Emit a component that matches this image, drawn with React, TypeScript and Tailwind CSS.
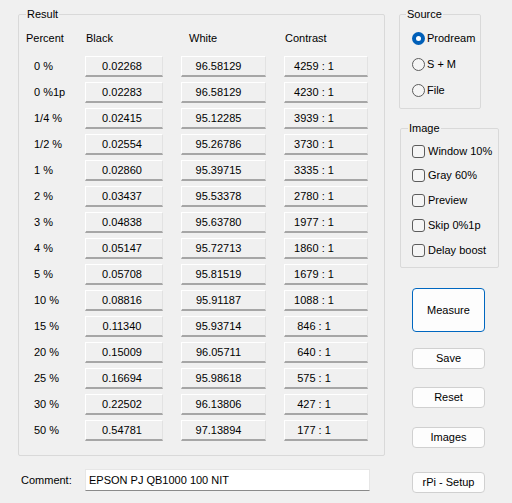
import React from 'react';

const rows: [string, string, string, string][] = [
  ['0 %', '0.02268', '96.58129', '4259 : 1'],
  ['0 %1p', '0.02283', '96.58129', '4230 : 1'],
  ['1/4 %', '0.02415', '95.12285', '3939 : 1'],
  ['1/2 %', '0.02554', '95.26786', '3730 : 1'],
  ['1 %', '0.02860', '95.39715', '3335 : 1'],
  ['2 %', '0.03437', '95.53378', '2780 : 1'],
  ['3 %', '0.04838', '95.63780', '1977 : 1'],
  ['4 %', '0.05147', '95.72713', '1860 : 1'],
  ['5 %', '0.05708', '95.81519', '1679 : 1'],
  ['10 %', '0.08816', '95.91187', '1088 : 1'],
  ['15 %', '0.11340', '95.93714', '846 : 1'],
  ['20 %', '0.15009', '96.05711', '640 : 1'],
  ['25 %', '0.16694', '95.98618', '575 : 1'],
  ['30 %', '0.22502', '96.13806', '427 : 1'],
  ['50 %', '0.54781', '97.13894', '177 : 1'],
];

const cell =
  'h-[21px] flex items-center justify-center bg-[#f0f0f0] border-t border-l border-t-white border-l-white border-r border-r-[#e2e2e2] border-b-2 border-b-[#a6a6a6]';

const Radio: React.FC<{ label: string; checked?: boolean }> = ({ label, checked }) => (
  <div className="h-[16px] flex items-center ml-[6px]">
    {checked ? (
      <span className="w-[13px] h-[13px] rounded-full bg-[#005fb8] flex items-center justify-center">
        <span className="w-[5px] h-[5px] rounded-full bg-white" />
      </span>
    ) : (
      <span className="w-[13px] h-[13px] rounded-full border border-[#5c5c5c] bg-[#f5f5f5]" />
    )}
    <span className="ml-[2px]">{label}</span>
  </div>
);

const Check: React.FC<{ label: string }> = ({ label }) => (
  <div className="h-[16px] flex items-center ml-[4px]">
    <span className="w-[13px] h-[13px] rounded-[3px] border border-[#5c5c5c] bg-[#f5f5f5]" />
    <span className="ml-[3px]">{label}</span>
  </div>
);

const Button: React.FC<{ label: string; className?: string; primary?: boolean }> = ({ label, className, primary }) => (
  <button
    className={`ml-[13px] w-[73px] flex items-center justify-center rounded-[4px] bg-[#fdfdfd] ${
      primary ? 'border border-[#0067c0]' : 'border border-[#d0d0d0]'
    } ${className ?? ''}`}
  >
    {label}
  </button>
);

export default function App() {
  return (
    <div className="w-[512px] h-[503px] bg-[#f0f0f0] flex text-[11px] leading-[13px] text-black font-['Liberation_Sans',Arial,sans-serif]">
      {/* Left column */}
      <div className="pl-[18px] pt-[8px] flex flex-col">
        <fieldset className="w-[367px] border border-[#d9d9d9] rounded-[2px] pl-[7px] pb-[14px]">
          <legend className="px-[1px] leading-[13px]">Result</legend>
          <div className="flex h-[14px] items-center mt-[10px]">
            <span className="w-[60px]">Percent</span>
            <span className="w-[103px]">Black</span>
            <span className="w-[96px]">White</span>
            <span>Contrast</span>
          </div>
          <div className="mt-[11px] flex flex-col gap-[5px]">
            {rows.map(([p, b, w, c]) => (
              <div key={p} className="flex items-center">
                <span className="w-[59px] pl-[8px]">{p}</span>
                <div className={`${cell} w-[78px] pr-[4px]`}>{b}</div>
                <div className={`${cell} w-[85px] ml-[18px] pr-[10px]`}>{w}</div>
                <div className={`${cell} w-[84px] ml-[18px] pr-[24px]`}>{c}</div>
              </div>
            ))}
          </div>
        </fieldset>

        <div className="mt-[13px] flex items-center">
          <span className="ml-[3px] w-[64px]">Comment:</span>
          <div className="w-[285px] h-[22px] bg-white border border-[#e6e6e6] border-b-[#8a8a8a] flex items-center pl-[3px]">
            EPSON PJ QB1000 100 NIT
          </div>
        </div>
      </div>

      {/* Right column */}
      <div className="ml-[14px] pt-[8px] flex flex-col">
        <fieldset className="w-[82px] border border-[#d9d9d9] rounded-[2px] pl-[6px] pb-[10px]">
          <legend className="px-[1px] leading-[13px]">Source</legend>
          <div className="mt-[9px] flex flex-col gap-[10px]">
            <Radio label="Prodream" checked />
            <Radio label="S + M" />
            <Radio label="File" />
          </div>
        </fieldset>

        <fieldset className="mt-[13px] ml-[1px] w-[99px] border border-[#d9d9d9] rounded-[2px] pl-[7px] pb-[9px]">
          <legend className="px-[1px] leading-[13px]">Image</legend>
          <div className="mt-[8px] flex flex-col gap-[8.75px]">
            <Check label="Window 10%" />
            <Check label="Gray 60%" />
            <Check label="Preview" />
            <Check label="Skip 0%1p" />
            <Check label="Delay boost" />
          </div>
        </fieldset>

        <Button label="Measure" primary className="mt-[20px] h-[44px]" />
        <Button label="Save" className="mt-[16px] h-[21px]" />
        <Button label="Reset" className="mt-[18px] h-[21px]" />
        <Button label="Images" className="mt-[19px] h-[21px]" />
        <Button label="rPi - Setup" className="mt-[24px] h-[21px]" />
      </div>
    </div>
  );
}
